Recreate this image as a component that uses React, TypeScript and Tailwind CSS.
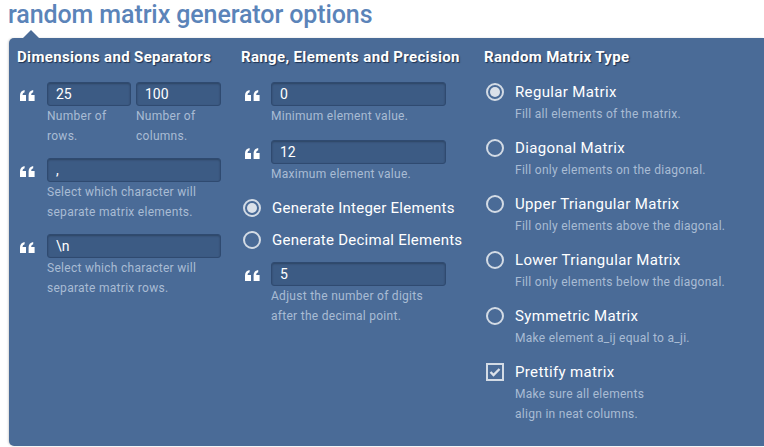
import React from 'react';

const QuoteIcon: React.FC = () => (
    <svg width="15" height="11" viewBox="0 0 15 11" className="fill-white">
        <path d="M0 11 V5.5 C0 2.5 1.6 0.6 4.6 0 V2.2 C3.2 2.7 2.6 3.6 2.6 5 H6 V11 Z" />
        <path d="M8.6 11 V5.5 C8.6 2.5 10.2 0.6 13.2 0 V2.2 C11.8 2.7 11.2 3.6 11.2 5 H14.6 V11 Z" />
    </svg>
);

const Radio: React.FC<{ checked?: boolean }> = ({ checked }) => (
    <span className="flex h-[18px] w-[18px] flex-shrink-0 items-center justify-center rounded-full border-2 border-[#d3dbe5]">
        {checked && <span className="h-[10px] w-[10px] rounded-full bg-[#dbe1e9]"></span>}
    </span>
);

const Checkbox: React.FC = () => (
    <span className="flex h-[18px] w-[18px] flex-shrink-0 items-center justify-center border-2 border-[#d3dbe5]">
        <svg width="12" height="10" viewBox="0 0 12 10">
            <path d="M1.5 5 L4.5 8 L10.5 2" stroke="#dbe1e9" strokeWidth="2.4" fill="none" />
        </svg>
    </span>
);

const Field: React.FC<{ value: string; className?: string }> = ({ value, className }) => (
    <div className={`h-6 rounded-[3px] border border-[#2f4a70] bg-[#3c5b84] px-2 text-[14px] leading-[22px] text-white shadow-[inset_0_1px_2px_rgba(0,0,0,0.25)] ${className ?? ''}`}>
        {value}
    </div>
);

const Help: React.FC<{ children: React.ReactNode }> = ({ children }) => (
    <p className="text-[12px] leading-5 tracking-[0.28px] text-[#a9bcd4]">{children}</p>
);

const Header: React.FC<{ children: React.ReactNode }> = ({ children }) => (
    <h3 className="text-[15px] leading-5 font-bold tracking-[0.35px] text-white [text-shadow:1px_1px_1px_#1d3150]">{children}</h3>
);

const types = [
    { name: 'Regular Matrix', desc: 'Fill all elements of the matrix.', checked: true },
    { name: 'Diagonal Matrix', desc: 'Fill only elements on the diagonal.' },
    { name: 'Upper Triangular Matrix', desc: 'Fill only elements above the diagonal.' },
    { name: 'Lower Triangular Matrix', desc: 'Fill only elements below the diagonal.' },
    { name: 'Symmetric Matrix', desc: 'Make element a_ij equal to a_ji.' },
];

export default function App() {
    return (
        <div className="h-[447px] w-[764px] overflow-hidden bg-white font-['Roboto',sans-serif]">
            <h1 className="pl-2 text-[25px] leading-[30px] font-medium tracking-[-0.1px] text-[#5b84b9]">random matrix generator options</h1>

            <div className="relative ml-[9px] mt-2 h-[408px] rounded-tl-[5px] rounded-bl-[5px] bg-[#4a6b97] pl-2 pt-[9px] shadow-[-1px_0_2px_rgba(0,0,0,0.15)]">
                {/* notch */}
                <div className="absolute left-[14px] top-[-8px] h-0 w-0 border-x-[8px] border-b-[8px] border-x-transparent border-b-[#4a6b97]"></div>

                <div className="grid grid-cols-[224px_243px_1fr]">
                    {/* Dimensions and Separators */}
                    <div>
                        <Header>Dimensions and Separators</Header>
                        <div className="mt-[15px] flex">
                            <div className="w-[30px] pl-[3px] pt-[8px]"><QuoteIcon /></div>
                            <div>
                                <div className="flex gap-[5px]">
                                    <div className="w-[84px]">
                                        <Field value="25" />
                                        <Help>Number of<br />rows.</Help>
                                    </div>
                                    <div className="w-[85px]">
                                        <Field value="100" />
                                        <Help>Number of<br />columns.</Help>
                                    </div>
                                </div>
                            </div>
                        </div>
                        <div className="mt-3 flex">
                            <div className="w-[30px] pl-[3px] pt-[8px]"><QuoteIcon /></div>
                            <div className="w-[174px]">
                                <Field value="," />
                                <Help>Select which character will<br />separate matrix elements.</Help>
                            </div>
                        </div>
                        <div className="mt-3 flex">
                            <div className="w-[30px] pl-[3px] pt-[8px]"><QuoteIcon /></div>
                            <div className="w-[174px]">
                                <Field value="\n" />
                                <Help>Select which character will<br />separate matrix rows.</Help>
                            </div>
                        </div>
                    </div>

                    {/* Range, Elements and Precision */}
                    <div>
                        <Header>Range, Elements and Precision</Header>
                        <div className="mt-[15px] flex">
                            <div className="w-[30px] pl-[4px] pt-[8px]"><QuoteIcon /></div>
                            <div className="w-[175px]">
                                <Field value="0" />
                                <Help>Minimum element value.</Help>
                            </div>
                        </div>
                        <div className="mt-[14px] flex">
                            <div className="w-[30px] pl-[4px] pt-[8px]"><QuoteIcon /></div>
                            <div className="w-[175px]">
                                <Field value="12" />
                                <Help>Maximum element value.</Help>
                            </div>
                        </div>
                        <div className="mt-3 flex h-6 items-center gap-[11px] pl-[2px] text-[15px] tracking-[0.25px] text-white">
                            <Radio checked />
                            <span>Generate Integer Elements</span>
                        </div>
                        <div className="mt-2 flex h-6 items-center gap-[11px] pl-[2px] text-[15px] tracking-[0.25px] text-white">
                            <Radio />
                            <span>Generate Decimal Elements</span>
                        </div>
                        <div className="mt-[10px] flex">
                            <div className="w-[30px] pl-[4px] pt-[8px]"><QuoteIcon /></div>
                            <div className="w-[175px]">
                                <Field value="5" />
                                <Help>Adjust the number of digits<br />after the decimal point.</Help>
                            </div>
                        </div>
                    </div>

                    {/* Random Matrix Type */}
                    <div>
                        <Header>Random Matrix Type</Header>
                        <div className="mt-[15px] flex flex-col gap-[14px]">
                            {types.map((t) => (
                                <div key={t.name} className="flex gap-[11px] pl-[2px]">
                                    <div className="pt-px"><Radio checked={t.checked} /></div>
                                    <div>
                                        <div className="text-[15px] leading-5 tracking-[0.35px] text-white">{t.name}</div>
                                        <div className="mt-[2px]"><Help>{t.desc}</Help></div>
                                    </div>
                                </div>
                            ))}
                            <div className="flex gap-[11px] pl-[2px]">
                                <div className="pt-px"><Checkbox /></div>
                                <div>
                                    <div className="text-[15px] leading-5 tracking-[0.35px] text-white">Prettify matrix</div>
                                    <div className="mt-[2px]"><Help>Make sure all elements<br />align in neat columns.</Help></div>
                                </div>
                            </div>
                        </div>
                    </div>
                </div>
            </div>
        </div>
    );
}
